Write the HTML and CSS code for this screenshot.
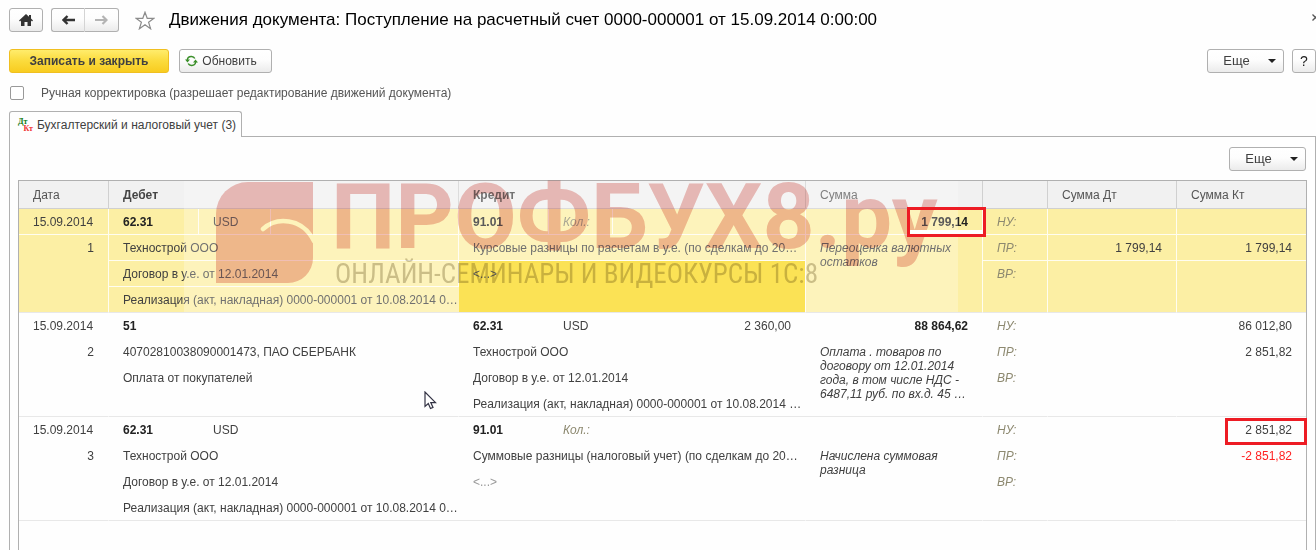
FILE: index.html
```html
<!DOCTYPE html>
<html lang="ru">
<head>
<meta charset="utf-8">
<title>Движения документа</title>
<link rel="stylesheet" href="styles.css">
</head>
<body>
<header class="titlebar">
  <button class="btn btn-home" aria-label="Домой">
    <svg width="14" height="12" viewBox="0 0 14 12"><path d="M7 0 0 6.500l1 1L2 6.600V12h3.500V8h3v4H12V6.600l1 .9 1-1-2-1.900V1h-2v1.800z" fill="#333"/></svg>
  </button>
  <div class="nav">
    <button class="btn nav-back" aria-label="Назад">
      <svg width="13" height="10" viewBox="0 0 13 10"><path d="M5.500 1 1.500 5l4 4M2 5h11" fill="none" stroke="#333" stroke-width="2.400"/></svg>
    </button>
    <button class="btn nav-next" aria-label="Вперед">
      <svg width="13" height="10" viewBox="0 0 13 10"><path d="M7.500 1l4 4-4 4M11 5H0" fill="none" stroke="#b4b4b4" stroke-width="2.200"/></svg>
    </button>
  </div>
  <button class="star" aria-label="В избранное">
    <svg width="20" height="19" viewBox="0 0 20 19"><path d="M10 1.200 12.200 7.300H19L13.600 11.200 15.600 17.800 10 13.800 4.400 17.800 6.400 11.200 1 7.300H7.800Z" fill="#fff" stroke="#8c8c8c" stroke-width="1.200"/></svg>
  </button>
  <h1 class="title">Движения документа: Поступление на расчетный счет 0000-000001 от 15.09.2014 0:00:00</h1>
  <button class="close" aria-label="Закрыть">
    <svg width="7" height="7" viewBox="0 0 7 7"><path d="M.5.500l6 6M6.500.500l-6 6" stroke="#555" stroke-width="1.300"/></svg>
  </button>
</header>

<div class="toolbar">
  <button class="btn btn-primary">Записать и закрыть</button>
  <button class="btn btn-refresh">
    <svg width="13" height="12" viewBox="0 0 13 12"><path d="M2.300 5C2.600 2.800 4.500 1.500 6.500 1.600 8 1.700 9.200 2.300 9.800 3.500M10.700 7C10.400 9.200 8.500 10.500 6.500 10.400 5 10.300 3.800 9.700 3.200 8.500" fill="none" stroke="#3b8f2a" stroke-width="1.500"/><path d="M0 4.600h5L2.500 7.600zM13 7.400H8l2.500-3z" fill="#3b8f2a"/></svg>
    Обновить
  </button>
  <span class="spacer"></span>
  <button class="btn btn-more">Еще <i class="caret"></i></button>
  <button class="btn btn-help">?</button>
</div>

<label class="manual"><input type="checkbox" class="check">Ручная корректировка (разрешает редактирование движений документа)</label>

<div class="tabs">
  <button class="tab"><span class="dtkt"><b class="dt">Дт</b><b class="kt">Кт</b></span>Бухгалтерский и налоговый учет (3)</button>
</div>

<main class="panel">
  <div class="panel-bar"><button class="btn btn-more">Еще <i class="caret"></i></button></div>
  <div class="grid">
    <table class="entries">
      <colgroup>
        <col class="c-date"><col class="c-acc"><col class="c-cur"><col class="c-rest">
        <col class="c-acc"><col class="c-cur2"><col class="c-qty"><col class="c-sum">
        <col class="c-kind"><col class="c-amt"><col class="c-amt">
      </colgroup>
      <thead>
        <tr><th>Дата</th><th colspan="3" class="strong">Дебет</th><th colspan="3" class="strong">Кредит</th><th>Сумма</th><th></th><th>Сумма Дт</th><th>Сумма Кт</th></tr>
      </thead>
      <tbody class="selected">
        <tr><td>15.09.2014</td><td class="strong">62.31</td><td>USD</td><td></td><td class="strong">91.01</td><td class="hint">Кол.:</td><td></td><td class="num strong marked">1 799,14<span class="mark mark-sum"></span></td><td class="hint">НУ:</td><td></td><td></td></tr>
        <tr><td rowspan="3" class="num end">1</td><td colspan="3">Технострой ООО</td><td colspan="3">Курсовые разницы по расчетам в у.е. (по сделкам до 20…</td><td rowspan="3" class="note end">Переоценка валютных остатков</td><td class="hint">ПР:</td><td class="num">1 799,14</td><td class="num">1 799,14</td></tr>
        <tr><td colspan="3">Договор в у.е. от 12.01.2014</td><td colspan="3" rowspan="2" class="current end">&lt;...&gt;</td><td rowspan="2" class="hint end">ВР:</td><td rowspan="2" class="end"></td><td rowspan="2" class="end"></td></tr>
        <tr><td colspan="3" class="end">Реализация (акт, накладная) 0000-000001 от 10.08.2014 0…</td></tr>
      </tbody>
      <tbody>
        <tr><td>15.09.2014</td><td class="strong">51</td><td></td><td></td><td class="strong">62.31</td><td>USD</td><td class="num">2 360,00</td><td class="num strong">88 864,62</td><td class="hint">НУ:</td><td></td><td class="num">86 012,80</td></tr>
        <tr><td rowspan="3" class="num end">2</td><td colspan="3">40702810038090001473, ПАО СБЕРБАНК</td><td colspan="3">Технострой ООО</td><td rowspan="3" class="note end">Оплата . товаров по договору от 12.01.2014 года, в том числе НДС - 6487,11 руб. по вх.д. 45 …</td><td class="hint">ПР:</td><td></td><td class="num">2 851,82</td></tr>
        <tr><td colspan="3">Оплата от покупателей</td><td colspan="3">Договор в у.е. от 12.01.2014</td><td rowspan="2" class="hint end">ВР:</td><td rowspan="2" class="end"></td><td rowspan="2" class="end"></td></tr>
        <tr><td colspan="3" class="end"></td><td colspan="3" class="end">Реализация (акт, накладная) 0000-000001 от 10.08.2014 …</td></tr>
      </tbody>
      <tbody>
        <tr><td>15.09.2014</td><td class="strong">62.31</td><td>USD</td><td></td><td class="strong">91.01</td><td class="hint">Кол.:</td><td></td><td></td><td class="hint">НУ:</td><td></td><td class="num marked">2 851,82<span class="mark mark-kt"></span></td></tr>
        <tr><td rowspan="3" class="num end">3</td><td colspan="3">Технострой ООО</td><td colspan="3">Суммовые разницы (налоговый учет) (по сделкам до 20…</td><td rowspan="3" class="note end">Начислена суммовая разница</td><td class="hint">ПР:</td><td></td><td class="num negative">-2 851,82</td></tr>
        <tr><td colspan="3">Договор в у.е. от 12.01.2014</td><td colspan="3" rowspan="2" class="empty end">&lt;...&gt;</td><td rowspan="2" class="hint end">ВР:</td><td rowspan="2" class="end"></td><td rowspan="2" class="end"></td></tr>
        <tr><td colspan="3" class="end">Реализация (акт, накладная) 0000-000001 от 10.08.2014 0…</td></tr>
      </tbody>
    </table>

    <div class="haze"></div>
    <svg class="wm-logo" width="97" height="101" viewBox="0 0 97 101">
      <mask id="swoosh" maskUnits="userSpaceOnUse" x="0" y="0" width="97" height="101"><rect width="97" height="101" fill="#fff"/><path d="M47 47C60 35 86 35 98 59" fill="none" stroke="#000" stroke-width="4.500" stroke-linecap="round"/></mask>
      <path d="M32 0H97V76A25 25 0 0 1 72 101H0V32A32 32 0 0 1 32 0Z" fill="#f0c0bc" mask="url(#swoosh)"/>
    </svg>
    <div class="wm-name">ПРОФБУХ8.ру</div>
    <div class="wm-sub">ОНЛАЙН-СЕМИНАРЫ И ВИДЕОКУРСЫ 1С:8</div>
    <svg class="cursor" width="13" height="19" viewBox="0 0 13 19"><path d="M1 1V15.500L4.300 12.500 6.500 17.500 9 16.400 6.800 11.600H11.500Z" fill="#fff" stroke="#333344" stroke-width="1.200"/></svg>
  </div>
</main>
</body>
</html>
```

FILE: styles.css
```css
* { box-sizing: border-box; }

body {
  margin: 0;
  height: 100vh;
  overflow: hidden;
  display: flex;
  flex-direction: column;
  background: #fefefe;
  color: #404040;
  font: 12px/14px "Liberation Sans", Arial, sans-serif;
}

button, input { font: inherit; color: inherit; margin: 0; }

.titlebar {
  display: flex;
  align-items: center;
  height: 40px;
  padding-left: 9px;
}

.btn {
  display: flex;
  align-items: center;
  justify-content: center;
  height: 24px;
  padding: 0;
  border: 1px solid #b0b0b0;
  border-radius: 3px;
  background: linear-gradient(#fff, #fdfdfd 45%, #ebebeb);
}

.btn-home { width: 34px; }
.nav { display: flex; margin-left: 8px; }
.nav .btn { width: 34px; }
.nav .nav-back { border-radius: 3px 0 0 3px; border-right-color: #d4d4d4; }
.nav .nav-next { border-left: 0; border-radius: 0 3px 3px 0; }

.star, .close {
  display: flex;
  padding: 0;
  border: 0;
  background: none;
}
.star { margin-left: 16px; }
.close { margin: 0 -3px 6px auto; flex: none; }

.title {
  margin: 0 0 0 14px;
  color: #000;
  font-size: 17px;
  font-weight: 400;
  line-height: 20px;
  white-space: nowrap;
}

.toolbar {
  display: flex;
  gap: 10px;
  padding: 9px 0 0 9px;
}
.spacer { flex: 1; }

.btn-primary {
  width: 160px;
  border-color: #f0bf20;
  background: linear-gradient(#ffec6c, #fbdb3c 50%, #f8cc20);
  font-weight: 700;
}
.btn-refresh { width: 93px; gap: 4px; padding-right: 9px; }
.btn-more {
  width: 77px;
  gap: 18px;
  padding-left: 8px;
  font-size: 13px;
}
.btn-help {
  width: 24px;
  margin-left: -2px;
  color: #222;
  font-size: 14px;
}

.caret {
  border: 4px solid transparent;
  border-top: 4px solid #222;
  border-bottom: 0;
}

.manual {
  display: flex;
  align-items: center;
  gap: 17px;
  padding: 13px 0 0 10px;
  color: #555;
}
.check {
  appearance: none;
  width: 14px;
  height: 14px;
  border: 1px solid #999;
  border-radius: 2px;
  background: #fff;
}

.tabs { display: flex; margin-top: 11px; padding-left: 9px; }
.tab {
  position: relative;
  z-index: 1;
  display: flex;
  align-items: center;
  gap: 4px;
  height: 26px;
  margin-bottom: -1px;
  padding: 0 5px 0 8px;
  border: 1px solid #b0b0b0;
  border-bottom: 0;
  border-radius: 3px 3px 0 0;
  background: #fefefe;
}
.dtkt {
  display: flex;
  flex-direction: column;
  width: 15px;
  font: 700 8px/7px "Liberation Serif", serif;
}
.dt { color: #117a11; text-align: left; }
.kt { color: #f03030; text-align: right; }

.panel {
  flex: 1;
  display: flex;
  flex-direction: column;
  min-height: 0;
  margin-left: 9px;
  padding: 10px 9px 0 9px;
  border: 1px solid #b0b0b0;
  border-bottom: 0;
}
.panel-bar { display: flex; justify-content: flex-end; }

.grid {
  position: relative;
  flex: 1;
  margin: 9px -1px 0 -1px;
  border: 1px solid #b0b0b0;
  border-bottom: 0;
}

.entries {
  width: 100%;
  table-layout: fixed;
  border-spacing: 0;
}
.c-date { width: 90px; }
.c-acc { width: 90px; }
.c-cur { width: 72px; }
.c-cur2 { width: 64px; }
.c-qty { width: 193px; }
.c-sum { width: 177px; }
.c-kind { width: 65px; }
.c-amt { width: 129px; }

.entries th {
  height: 28px;
  padding: 0 14px;
  border-right: 1px solid #d0d0d0;
  border-bottom: 1px solid #d0d0d0;
  background: #f1f1f1;
  color: #555;
  font-weight: 400;
  text-align: left;
}
.entries th.strong { color: #444; }
.entries th:last-child, .entries td:last-child { border-right: 0; }

.entries td {
  height: 26px;
  padding: 6px 14px 5px;
  border-right: 1px solid transparent;
  border-bottom: 1px solid transparent;
  vertical-align: top;
  white-space: nowrap;
}
.selected td {
  border-color: #fffdf0;
  background: #fcefa4;
}
.entries .end { border-bottom-color: #e8e8e8; }
.selected td.current { background: #fad91d; color: #222; }

.entries .strong { font-weight: 700; }
.entries td.strong { color: #222; }
.entries .num { text-align: right; }
.entries .note { font-style: italic; white-space: normal; }
.entries .hint { color: #8d8970; font-style: italic; }
.entries .empty { color: #999; }
.entries .negative { color: #f22; }

.marked { position: relative; }
.mark {
  position: absolute;
  z-index: 1;
  border: 3px solid #ed1c24;
}
.mark-sum {
  inset: -2px -4px -3px 101px;
  box-shadow: inset 0 -4px #fff;
}
.mark-kt { inset: 1px -1px -3px 48px; }

.haze {
  position: absolute;
  top: 0;
  left: 165px;
  width: 774px;
  height: 131px;
  background: rgba(255, 255, 255, .25);
}
.wm-logo, .wm-name, .wm-sub {
  position: absolute;
  mix-blend-mode: multiply;
  white-space: nowrap;
}
.wm-logo { top: 1px; left: 197px; }
.wm-name {
  top: -14px;
  left: 312px;
  color: #f0c0bc;
  font: 700 91px/100px Roboto, sans-serif;
}
.wm-sub {
  top: 76px;
  left: 316px;
  color: #cdc8b8;
  font: 400 27px/34px "Roboto Condensed", Roboto, sans-serif;
}
.cursor {
  position: absolute;
  top: 210px;
  left: 405px;
}
```
